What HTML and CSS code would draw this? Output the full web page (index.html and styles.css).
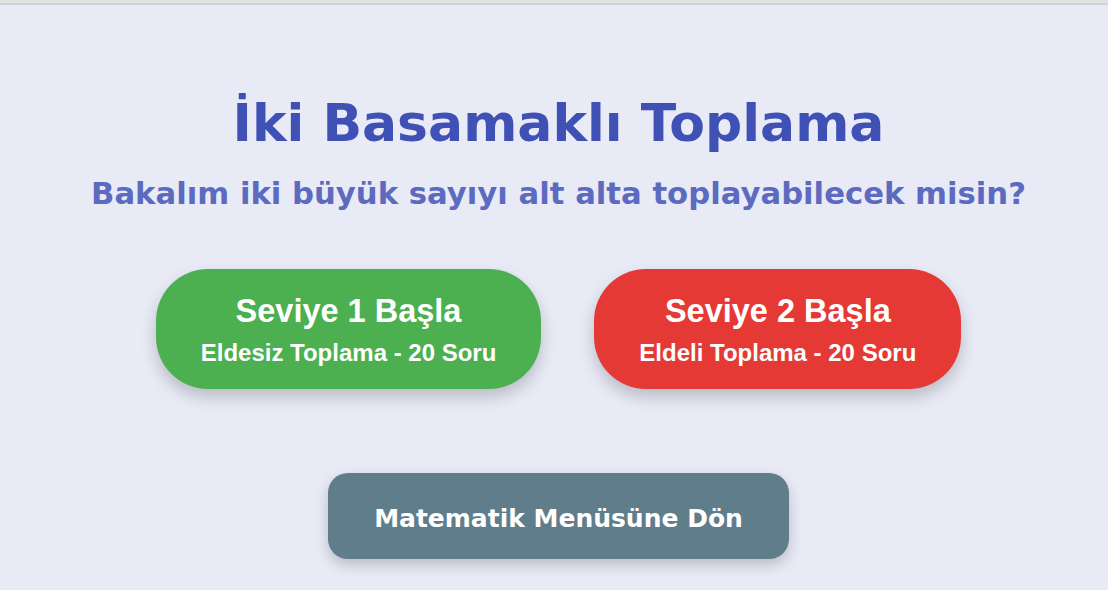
FILE: index.html
```html
<!DOCTYPE html>
<html lang="tr">
<head>
<meta charset="utf-8">
<title>İki Basamaklı Toplama</title>
<link rel="stylesheet" href="styles.css">
</head>
<body>
<div class="topbar"></div>
<main class="page">
  <h1 class="title">İki Basamaklı Toplama</h1>
  <p class="subtitle">Bakalım iki büyük sayıyı alt alta toplayabilecek misin?</p>
  <div class="levels">
    <button class="level level-green">
      <span class="level-name">Seviye 1 Başla</span>
      <span class="level-desc">Eldesiz Toplama - 20 Soru</span>
    </button>
    <button class="level level-red">
      <span class="level-name">Seviye 2 Başla</span>
      <span class="level-desc">Eldeli Toplama - 20 Soru</span>
    </button>
  </div>
  <button class="back">Matematik Menüsüne Dön</button>
</main>
</body>
</html>
```
FILE: styles.css
```css
html, body {
  margin: 0;
  padding: 0;
  height: 100%;
}
body {
  background: #e8eaf6;
  font-family: "Comic Sans MS", "DejaVu Sans", sans-serif;
  overflow: hidden;
}
.topbar {
  height: 3px;
  background: #e2e2df;
  border-bottom: 2px solid #d2d2da;
}
.page {
  display: flex;
  flex-direction: column;
  align-items: center;
  padding-top: 88px;
  padding-left: 9px;
}
.title {
  margin: 0;
  font-size: 52px;
  line-height: 60px;
  font-weight: bold;
  color: #3f51b5;
}
.subtitle {
  margin: 23px 0 0;
  font-size: 30.7px;
  line-height: 36px;
  font-weight: bold;
  color: #5c6bc0;
}
.levels {
  display: flex;
  gap: 53px;
  margin-top: 57px;
}
.level {
  display: flex;
  flex-direction: column;
  align-items: center;
  justify-content: center;
  height: 120px;
  padding: 0 45px;
  border: none;
  border-radius: 52px;
  color: #fff;
  font-family: "Liberation Sans", Arial, sans-serif;
  font-weight: bold;
  box-shadow: 0 8px 16px rgba(0, 0, 0, 0.2);
  cursor: pointer;
}
.level-green { background: #4caf50; }
.level-red { background: #e53935; }
.level-name {
  font-size: 32.5px;
  line-height: 38px;
}
.level-desc {
  font-size: 24px;
  line-height: 28px;
  margin-top: 9px;
}
.back {
  margin-top: 84px;
  height: 86px;
  padding: 4px 46px 0;
  border: none;
  border-radius: 20px;
  background: #607d8b;
  color: #fff;
  font-family: "Comic Sans MS", "DejaVu Sans", sans-serif;
  font-size: 25px;
  font-weight: bold;
  box-shadow: 0 6px 14px rgba(0, 0, 0, 0.2);
  cursor: pointer;
}
```
